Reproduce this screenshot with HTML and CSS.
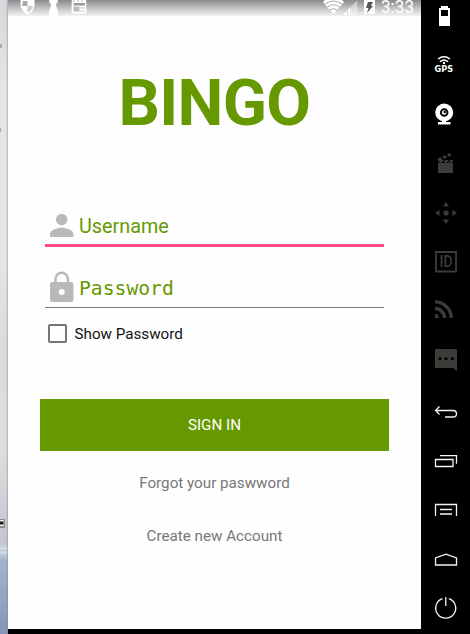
FILE: index.html
```html
<!DOCTYPE html>
<html lang="en">
<head>
<meta charset="utf-8">
<title>Bingo</title>
<link rel="stylesheet" href="styles.css">
</head>
<body>
<div class="emulator">
  <div class="desktop">
    <svg width="8" height="634" viewBox="0 0 8 634">
      <path d="M0 46h2M0 130h1" stroke="#aaa" stroke-width="4"/>
      <path d="M0 519h5v9H0z" fill="#8d8a88"/>
      <path d="M0 520.500h4M0 525.500h4" stroke="#f4eee8"/>
      <path d="M0 523h3" stroke="#161616" stroke-width="2"/>
      <path d="M0 548.500h7M0 552.500l7 1" stroke="#dce2ec"/>
    </svg>
  </div>
  <main class="screen">
    <header class="status">
      <svg width="413" height="16" viewBox="8 0 413 16">
        <path d="M20.500 0v5q1 7 7 9.500Q33.500 12 34.500 5V0z" fill="#fff"/>
        <path d="M23 1h4.500v5H22z" fill="#aaa"/><path d="M27.500 6H33q-1 4-5.500 6.500z" fill="#ccc"/>
        <path d="M49 0h9q0 3-2 4 .5 4 2 7v5h-9v-5q2-3 2-7-2-1-2-4z" fill="#fff"/>
        <rect x="71.700" y="0" width="14.600" height="13.500" rx="1" fill="#fff"/>
        <path d="M73.500 3h11.500v2.500H73.500z" fill="#999"/><path d="M73 1h12" stroke="#bbb" stroke-dasharray="2 2"/>
        <path d="M73.500 6.500h6v5h-6z" fill="#bbb"/><path d="M80 8h5M80 11h5" stroke="#ccc"/>
        <path d="M323 2l2-2h17l2 2-10.500 12z" fill="#fff"/>
        <path d="M325 4q8.500-6 17 0M327.500 7q6-4.500 12 0M330 10q3.500-3 7 0" fill="none" stroke="#aaa"/>
        <path d="M343 15L357.500 0v15z" fill="#fff" opacity=".42"/><path d="M343 15l7-7.500V15z" fill="#fff"/>
        <path d="M347.500 10v5" stroke="#ccc"/>
        <path d="M364 0h11v14h-11z" fill="#fff"/><path d="M368 2h5l-2 4h2l-6 7 1.500-5H366z" fill="#555"/>
        <text class="clock" x="381" y="13.300" textLength="33" lengthAdjust="spacingAndGlyphs">3:33</text>
      </svg>
    </header>
    <h1 class="title">BINGO</h1>
    <form class="form">
      <div class="field focused">
        <svg width="24" height="30" viewBox="50 210 24 30"><circle cx="61.700" cy="219.500" r="5.800"/><path d="M50 237v-3c0-4 7.500-6.200 11.700-6.200S73.400 230 73.400 234v3z"/></svg>
        <span>Username</span>
      </div>
      <div class="field password">
        <svg width="24" height="32" viewBox="50 271 24 32"><path d="M55.500 285v-6a6.200 6.200 0 0 1 12.400 0v6" fill="none" stroke="#b9b9b9" stroke-width="2.500"/><rect x="50" y="282" width="23.400" height="20" rx="2.500"/><circle class="hole" cx="61.700" cy="292" r="3"/></svg>
        <span>Password</span>
      </div>
      <label class="show"><i class="box"></i><span>Show Password</span></label>
    </form>
    <div class="signin">SIGN IN</div>
    <a class="link">Forgot your paswword</a>
    <a class="link second">Create new Account</a>
  </main>
  <nav class="tools">
    <svg viewBox="421 -8 49 49"><path fill="#fff" fill-rule="evenodd" d="M441 6h7v2h2v18h-11V8h2zM441 10v6h7v-6z"/></svg>
    <svg viewBox="421 41 49 49"><g fill="none" stroke="#fff" stroke-width="1.500"><path d="M438 59q6-4.500 12 0M440 61.700q4-3.500 8 0"/></g><circle cx="444" cy="63" r="1.200" fill="#fff"/><text class="gps" x="434.500" y="72.300" textLength="18.500" lengthAdjust="spacingAndGlyphs">GPS</text></svg>
    <svg viewBox="421 90 49 49"><circle cx="444.200" cy="112.500" r="9" fill="#fff"/><circle cx="444.200" cy="112.500" r="3.300" fill="#fff" stroke="#000" stroke-width="1.900"/><circle cx="444.800" cy="112" r="1.200" fill="#000"/><path fill="#fff" d="M442 120h4v2h4.500v2.500h-12.500V122h4z"/></svg>
    <svg viewBox="421 139 49 49" fill="#3c3c38"><path d="M438 163h15v10h-15z"/><path d="M437.500 158.500l3-1.300 2 2.200-4 1.700zM442.200 156.500l3-1.300 2 2.200-3 1.300zM447 154.400l3-1.300 1.500 2.400-2.800 1.200zM438 162l3-2h3l-3 3zM443 162l3-2h3l-3 3zM448 162l3-2h2v1l-2 2z"/></svg>
    <svg viewBox="421 188 49 49" fill="#3c3c38"><circle cx="446" cy="213" r="2.600"/><path d="M443 206.500l3-4.500 3 4.500zM443 219.500l3 4.500 3-4.500zM439.500 210l-4.500 3 4.500 3zM452.500 210l4.500 3-4.500 3z"/></svg>
    <svg viewBox="421 237 49 49"><path d="M436 252h20v19.500h-20z" fill="none" stroke="#3c3c38" stroke-width="1.800"/><text class="id" x="439.500" y="267.300" textLength="13" lengthAdjust="spacingAndGlyphs">ID</text></svg>
    <svg viewBox="421 286 49 49"><path d="M435 301.800a16.200 16.200 0 0 1 16.200 16.200M435 308.500a9.500 9.500 0 0 1 9.500 9.500" fill="none" stroke="#3c3c38" stroke-width="3.300"/><path d="M435 314q4 0 4 4h-4z" fill="#3c3c38"/></svg>
    <svg viewBox="421 335 49 49"><path d="M435 349h22v22l-4-3h-18z" fill="#3c3c38"/><g fill="#000"><circle cx="440" cy="358.700" r="1.600"/><circle cx="446" cy="358.700" r="1.600"/><circle cx="452.500" cy="358.700" r="1.600"/></g></svg>
    <svg class="nav" viewBox="421 387 49 49"><path d="M439.500 406.500l-4 4 4 4M435.500 410.500H453q3.500 0 3.500 3.200t-3.500 3.300h-8"/></svg>
    <svg class="nav" viewBox="421 436 49 49"><path d="M435.500 459.500h17.500v7h-17.500zM440 455.700h16.500v8"/></svg>
    <svg class="nav" viewBox="421 485 49 49"><path d="M435.500 516v-11.500h21V516M440 509.500h12"/><path d="M440 514h12" stroke="#bbb" stroke-width="2"/></svg>
    <svg class="nav" viewBox="421 534 49 49"><path d="M435.500 565v-7l10.500-3.800 10.500 3.800v7z"/></svg>
    <svg class="nav" viewBox="421 583 49 49"><path d="M442.500 598.700a10 10 0 1 0 6.400 0M445.800 597v9"/></svg>
  </nav>
</div>
</body>
</html>
```
FILE: styles.css
```css
body { margin: 0; background: #000; font-family: Roboto, "Liberation Sans", sans-serif; }
.emulator { display: flex; width: 470px; height: 634px; overflow: hidden; }
svg { display: block; }
.desktop { width: 8px; background: linear-gradient(90deg, transparent 6px, #85858588 8px), linear-gradient(#d5d7dc, #e4e4e5 80px, #e6e6e7 250px, #dadbde 350px, #dedee0 450px, #c3c6cf 544px, #cbd3e0 547px, #c3cfe1 553px, #a4b4d0 560px, #8496b9 634px); }
.screen { display: flex; flex-direction: column; width: 413px; height: 629px; background: #fefefe; }
.status { height: 16px; background: linear-gradient(#898989, #c8c8c8 9px, #f3f3f3); }
.status svg { overflow: visible; }
.clock { font-size: 17.500px; fill: #fff; }
.title { margin: 49px 0 0; height: 76px; line-height: 76px; text-align: center; font-size: 65px; font-weight: 700; letter-spacing: -.7px; color: #690; }
.form { width: 339.500px; margin: 64px 0 0 36.500px; }
.field { display: flex; align-items: center; box-sizing: border-box; height: 42px; padding: 0 0 1px 5px; gap: 5.500px; font-size: 19.800px; color: #690; fill: #b9b9b9; }
.field span { padding-top: 2px; }
.focused { border-bottom: 3px solid #f84b84; padding-bottom: 0; }
.focused span { padding-top: 4px; }
.focused { height: 42.400px; }
.password { height: 60.600px; padding: 22px 0 2px 5px; border-bottom: 1px solid #777; }
.password span { font-family: "DejaVu Sans Mono", monospace; font-size: 19.700px; }
.hole { fill: #fefefe; }
.show { display: flex; align-items: center; gap: 8px; height: 20px; margin: 16px 0 0 3px; font-size: 15.200px; color: #111; }
.box { width: 15px; height: 15px; border: 2px solid #757575; border-radius: 2px; }
.signin { width: 349px; height: 51.500px; margin: 55.400px 0 0 32px; background: #690; color: #fff; text-align: center; line-height: 52px; font-size: 15.200px; }
.link { margin-top: 22.600px; height: 20px; line-height: 20px; text-align: center; font-size: 15.200px; color: #777; }
.second { margin-top: 32.500px; }
.tools { display: flex; flex-direction: column; width: 49px; margin-top: -8px; background: #000; }
.tools svg { flex: none; width: 49px; height: 49px; }
.nav { fill: none; stroke: #f4f4f4; stroke-width: 1.3; }
.tools svg:nth-child(9) { margin-top: 3px; }
.gps { font: bold 8px "DejaVu Sans", sans-serif; fill: #fff; }
.id { font-size: 16px; font-weight: 500; fill: #3c3c38; }
```
